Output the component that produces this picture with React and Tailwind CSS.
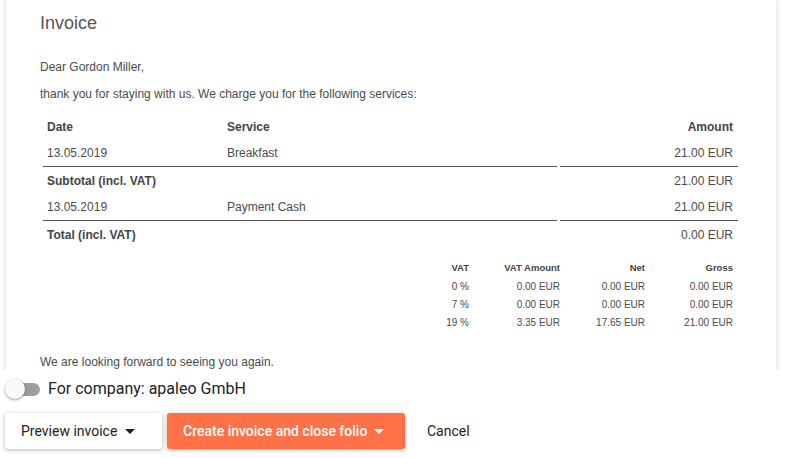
import React from 'react';

const mainRows = [
  { date: '13.05.2019', service: 'Breakfast', amount: '21.00 EUR', line: true },
  { date: 'Subtotal (incl. VAT)', service: '', amount: '21.00 EUR', bold: true },
  { date: '13.05.2019', service: 'Payment Cash', amount: '21.00 EUR', line: true },
  { date: 'Total (incl. VAT)', service: '', amount: '0.00 EUR', bold: true },
];

const vatRows = [
  ['0 %', '0.00 EUR', '0.00 EUR', '0.00 EUR'],
  ['7 %', '0.00 EUR', '0.00 EUR', '0.00 EUR'],
  ['19 %', '3.35 EUR', '17.65 EUR', '21.00 EUR'],
];

const Caret = ({ className }) => (
  <svg viewBox="0 0 10 5" className={className} fill="currentColor">
    <path d="M0 0 L10 0 L5 5 Z" />
  </svg>
);

const App = () => {
  return (
    <div className="w-[790px] h-[458px] bg-white overflow-hidden font-['Roboto',sans-serif]">
      {/* Invoice preview */}
      <div className="h-[370px] overflow-hidden px-[6px]">
        <div className="w-[770px] h-[400px] bg-white shadow-[0_0_6px_rgba(0,0,0,0.18)] pl-[34px] pr-[37px] pt-[11px] text-[#4b4b4b] font-['Liberation_Sans',Arial,sans-serif]">
          <h1 className="text-[18px] leading-[24px] text-[#555]">Invoice</h1>
          <p className="text-[12px] leading-[14px] mt-[25px]">Dear Gordon Miller,</p>
          <p className="text-[12px] leading-[14px] mt-[13px]">
            thank you for staying with us. We charge you for the following services:
          </p>

          {/* Services table */}
          <div className="mt-[13px] ml-[3px] w-[695px] text-[12px]">
            <div className="flex h-[26px] items-center font-bold text-[#444]">
              <div className="w-[514px] flex">
                <span className="w-[184px] pl-[4px]">Date</span>
                <span>Service</span>
              </div>
              <div className="ml-[3px] w-[178px] text-right pr-[5px]">Amount</div>
            </div>
            {mainRows.map((r, i) => (
              <div key={i} className={`flex ${r.bold ? 'font-bold text-[#444]' : ''}`}>
                <div className={`w-[514px] flex items-center h-[27px] ${r.line ? 'border-b border-[#555]' : ''}`}>
                  <span className="w-[184px] pl-[4px] shrink-0">{r.date}</span>
                  <span>{r.service}</span>
                </div>
                <div className={`ml-[3px] w-[178px] h-[27px] flex items-center justify-end pr-[5px] font-normal text-[#4b4b4b] ${r.line ? 'border-b border-[#555]' : ''}`}>
                  {r.amount}
                </div>
              </div>
            ))}
          </div>

          {/* VAT table */}
          <div className="mt-[11px] ml-[401px] w-[294px] pr-[2px]">
            <div className="flex h-[18px] items-center text-[9.5px] font-bold text-[#444]">
              <span className="w-[28px] text-right">VAT</span>
              <span className="w-[91px] text-right">VAT Amount</span>
              <span className="w-[85px] text-right">Net</span>
              <span className="w-[88px] text-right">Gross</span>
            </div>
            {vatRows.map((r, i) => (
              <div key={i} className="flex h-[18px] items-center text-[10px]">
                <span className="w-[28px] text-right">{r[0]}</span>
                <span className="w-[91px] text-right">{r[1]}</span>
                <span className="w-[85px] text-right">{r[2]}</span>
                <span className="w-[88px] text-right">{r[3]}</span>
              </div>
            ))}
          </div>

          <p className="text-[12px] leading-[14px] mt-[24px]">We are looking forward to seeing you again.</p>
        </div>
      </div>

      {/* Company toggle */}
      <div className="h-[38px] flex items-center pl-[5px]">
        <div className="relative w-[36px] h-[20px] flex items-center">
          <div className="ml-[3px] w-[32px] h-[13px] rounded-full bg-[#9e9e9e]" />
          <div className="absolute left-0 top-0 w-[20px] h-[20px] rounded-full bg-[#fafafa] shadow-[0_1px_3px_rgba(0,0,0,0.4)]" />
        </div>
        <span className="ml-[7px] text-[16px] text-[#222]">For company: apaleo GmbH</span>
      </div>

      {/* Actions */}
      <div className="flex items-center pt-[5px] pl-[5px]">
        <button className="h-[36px] w-[157px] rounded-[3px] bg-white shadow-[0_1px_4px_rgba(0,0,0,0.3)] flex items-center pl-[16px] text-[14px] text-[#222]">
          Preview invoice
          <Caret className="w-[10px] h-[5px] ml-[8px]" />
        </button>
        <button className="ml-[5px] h-[36px] w-[238px] rounded-[3px] bg-[#ff7247] shadow-[0_1px_4px_rgba(0,0,0,0.3)] flex items-center pl-[16px] text-[14px] font-medium text-white">
          Create invoice and close folio
          <Caret className="w-[10px] h-[5px] ml-[7px]" />
        </button>
        <button className="ml-[22px] h-[36px] text-[14px] text-[#222]">Cancel</button>
      </div>
    </div>
  );
};

export default App;
